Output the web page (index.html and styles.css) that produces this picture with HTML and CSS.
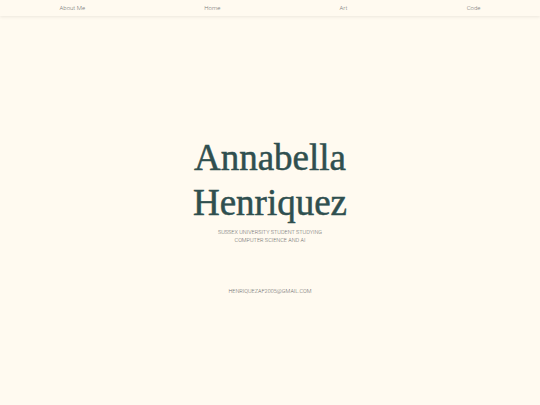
FILE: index.html
```html
<!DOCTYPE html>
<html>
<head>
<meta charset="utf-8">
<link rel="stylesheet" href="styles.css">
</head>
<body>
<nav class="nav">
  <a class="nav-link">About Me</a>
  <a class="nav-link">Home</a>
  <a class="nav-link">Art</a>
  <a class="nav-link">Code</a>
</nav>
<main class="hero">
  <h1 class="name">Annabella<br>Henriquez</h1>
  <p class="tagline">SUSSEX UNIVERSITY STUDENT STUDYING<br>COMPUTER SCIENCE AND AI</p>
  <a class="email">HENRIQUEZAF2005@GMAIL.COM</a>
</main>
</body>
</html>
```
FILE: styles.css
```css
html, body {
  margin: 0;
  padding: 0;
  background: #fffaf0;
  font-family: "Roboto", "Open Sans", sans-serif;
}
.nav {
  display: flex;
  justify-content: space-around;
  align-items: center;
  height: 15px;
  padding-bottom: 1px;
  box-shadow: 0 1px 3px rgba(0,0,0,0.08);
}
.nav-link {
  font-size: 6px;
  color: #7a7a7a;
  font-weight: 300;
}
.hero {
  display: flex;
  flex-direction: column;
  align-items: center;
  text-align: center;
  padding-top: 119px;
}
.name {
  margin: 0;
  font-family: "Liberation Serif", "DejaVu Serif", serif;
  font-weight: 400;
  font-size: 37px;
  line-height: 45px;
  color: #2f4f4f;
  -webkit-text-stroke: 0.5px #2f4f4f;
}
.tagline {
  margin: 3px 0 0;
  font-size: 5.5px;
  line-height: 8px;
  color: #6e6e6e;
  font-weight: 300;
}
.email {
  margin-top: 44px;
  font-size: 5.5px;
  color: #6e6e6e;
  text-decoration: underline;
  font-weight: 300;
}
```
